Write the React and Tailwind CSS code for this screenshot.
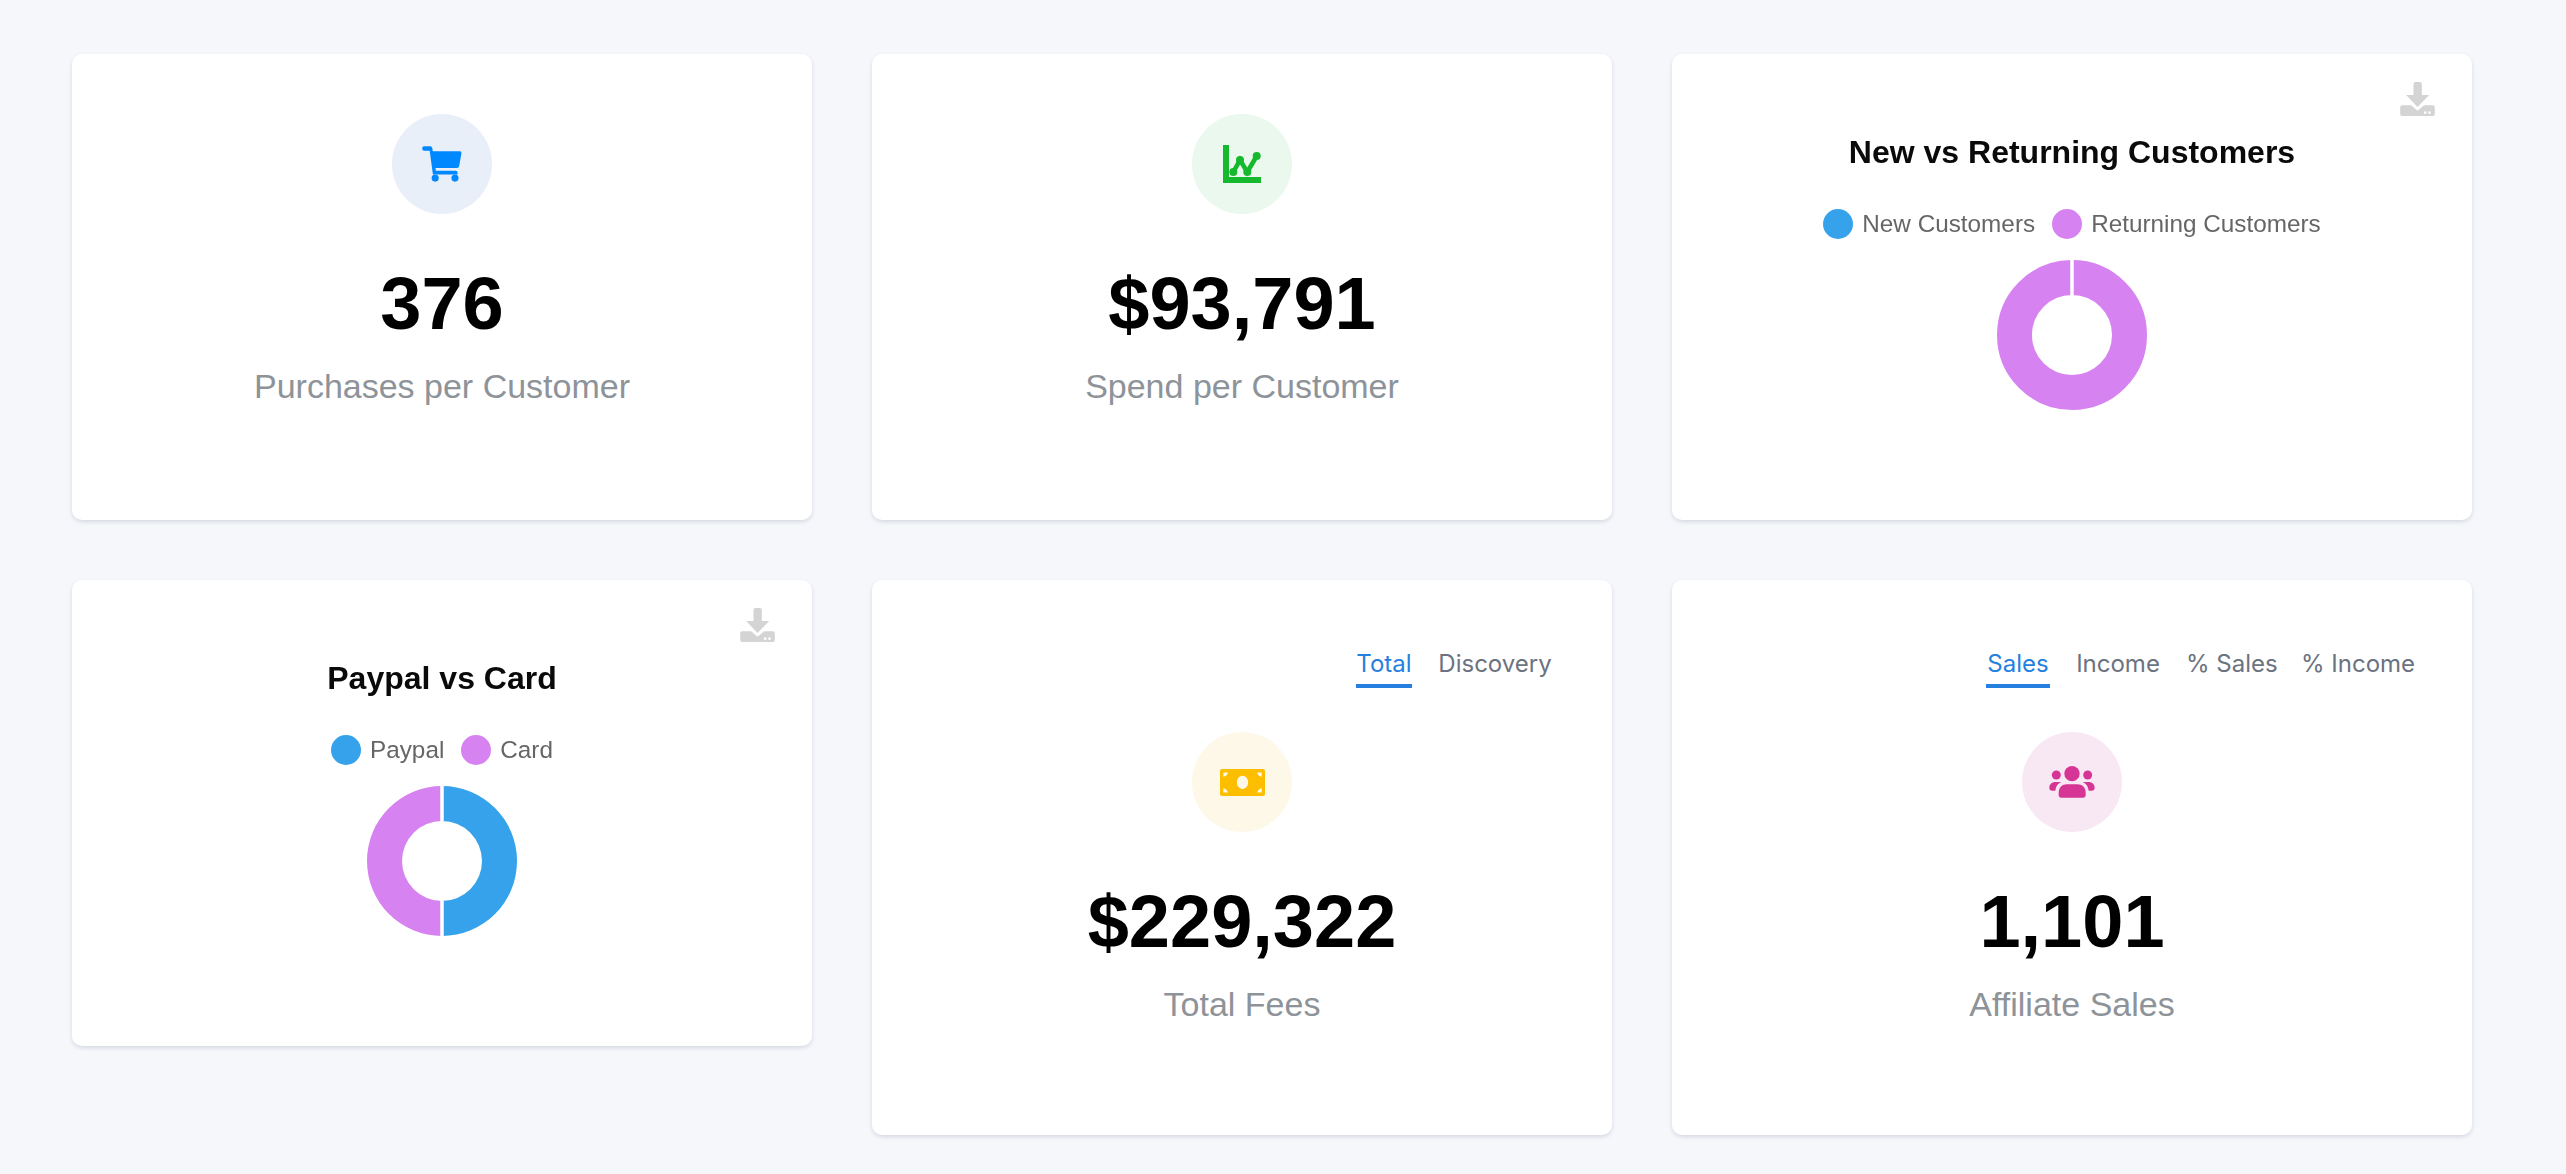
import React from "react";

const sans = "font-['Liberation_Sans',Arial,sans-serif]";
const cardBase = "rounded-[10px] bg-white shadow-[0_2px_4px_rgba(30,40,70,0.14)]";

function CartIcon() {
  return (
    <svg width="40" height="36" viewBox="125 137 122 111" fill="#0088ff">
      <path d="M131 138 H150 Q155 138 156 143 L157.5 153 H241 Q247 153 246 159 L239 199 Q238 205 232 205 H166 L167 213 H228 Q234 213 234 219 V225 H158 L148 152 H131 Q125 152 125 145 Q125 138 131 138 Z" />
      <circle cx="165" cy="236" r="11" />
      <circle cx="226" cy="236" r="11" />
    </svg>
  );
}

function ChartIcon() {
  return (
    <svg width="38" height="38" viewBox="0 0 38 38" fill="#16b92e">
      <rect x="0" y="0" width="6" height="38" />
      <rect x="0" y="32" width="38" height="6" />
      <polyline points="10.3,27 17,15 24.3,27 33.7,11" fill="none" stroke="#16b92e" strokeWidth="4.6" />
      <circle cx="10.3" cy="27" r="4" />
      <circle cx="17" cy="15" r="4" />
      <circle cx="24.3" cy="27" r="4" />
      <circle cx="33.7" cy="11" r="4" />
    </svg>
  );
}

function MoneyIcon() {
  return (
    <svg width="45" height="27" viewBox="267 447 136 81" fill="#fdbe00">
      <path
        fillRule="evenodd"
        d="M273 447 H397 a6 6 0 0 1 6 6 V522 a6 6 0 0 1 -6 6 H273 a6 6 0 0 1 -6 -6 V453 a6 6 0 0 1 6 -6 Z
           M277 457 V470 Q288 468 291 457 Z
           M393 457 V470 Q382 468 379 457 Z
           M277 518 V505 Q288 507 291 518 Z
           M393 518 V505 Q382 507 379 518 Z
           M335 467 a17 20 0 1 0 0.01 0 Z"
      />
    </svg>
  );
}

function GroupIcon() {
  return (
    <svg width="46" height="32" viewBox="267 440 136 96" fill="#d63595">
      <circle cx="335" cy="463" r="23" />
      <circle cx="288" cy="467" r="13.5" />
      <circle cx="382" cy="467" r="13.5" />
      <path d="M295 520 C295 505 305 495 320 495 H351 C366 495 376 505 376 520 V528 Q376 535 369 535 H302 Q295 535 295 528 Z" />
      <path d="M267 505 C267 495 275 488 285 488 H303 C294 492 287 499 285 514 H276 C270 514 267 511 267 505 Z" />
      <path d="M403 505 C403 495 395 488 385 488 H367 C376 492 383 499 385 514 H394 C400 514 403 511 403 505 Z" />
    </svg>
  );
}

function DownloadIcon() {
  return (
    <svg width="35" height="34" viewBox="88 66 104 102" fill="#d4d4d4" className="blur-[0.4px]">
      <path d="M128 72 a6 6 0 0 1 6 -6 h13 a6 6 0 0 1 6 6 V105 H175 L140 141 L106 105 H128 Z" />
      <path d="M94 136 H121 L140 152 L160 136 H186 a6 6 0 0 1 6 6 V162 a6 6 0 0 1 -6 6 H94 a6 6 0 0 1 -6 -6 V142 a6 6 0 0 1 6 -6 Z" />
      <circle cx="163" cy="158" r="4" fill="#ffffff" />
      <circle cx="176" cy="158" r="4" fill="#ffffff" />
    </svg>
  );
}

function StatBody({ bg, icon, value, label }) {
  return (
    <>
      <div className={`flex h-[100px] w-[100px] items-center justify-center rounded-full ${bg}`}>{icon}</div>
      <div className={`mt-[50px] text-[74px] leading-[80px] font-bold text-black ${sans}`}>{value}</div>
      <div className={`mt-[22px] text-[34px] leading-[40px] text-[#8d9399] ${sans}`}>{label}</div>
    </>
  );
}

function StatCard({ bg, icon, value, label }) {
  return (
    <div className={`flex h-[466px] flex-col items-center pt-[60px] ${cardBase}`}>
      <StatBody bg={bg} icon={icon} value={value} label={label} />
    </div>
  );
}

function Tabs({ items }) {
  return (
    <div className="flex w-full justify-end gap-[26px] pr-[60px]">
      {items.map((t, i) => (
        <div
          key={t.name}
          className={`h-[48px] border-b-4 pt-[9px] text-center text-[24px] leading-[30px] whitespace-nowrap font-['Inter',sans-serif] ${t.w} ${
            i === 0 ? "border-[#2680e0] text-[#2680e0]" : "border-transparent text-[#6b7280]"
          }`}
        >
          {t.name}
        </div>
      ))}
    </div>
  );
}

function TabCard({ tabs, bg, icon, value, label }) {
  return (
    <div className={`flex h-[555px] flex-col items-center pt-[60px] ${cardBase}`}>
      <Tabs items={tabs} />
      <div className="h-[44px]" />
      <StatBody bg={bg} icon={icon} value={value} label={label} />
    </div>
  );
}

function Donut({ half }) {
  const blue = "#36a2eb";
  const purple = "#d782f1";
  return (
    <svg width="150" height="150" viewBox="0 0 150 150">
      {half ? (
        <>
          <path d="M75 0 A75 75 0 0 1 75 150 V115 A40 40 0 0 0 75 35 Z" fill={blue} />
          <path d="M75 0 A75 75 0 0 0 75 150 V115 A40 40 0 0 1 75 35 Z" fill={purple} />
          <line x1="75" y1="0" x2="75" y2="35" stroke="#fff" strokeWidth="3.5" />
          <line x1="75" y1="115" x2="75" y2="150" stroke="#fff" strokeWidth="3.5" />
        </>
      ) : (
        <>
          <circle cx="75" cy="75" r="57.5" fill="none" stroke={purple} strokeWidth="35" />
          <line x1="75" y1="0" x2="75" y2="35" stroke="#fff" strokeWidth="3.5" />
        </>
      )}
    </svg>
  );
}

function ChartCard({ title, labels, half }) {
  return (
    <div className={`relative flex h-[466px] flex-col items-center pt-[78px] ${cardBase}`}>
      <div className="absolute top-[28px] right-[37px]">
        <DownloadIcon />
      </div>
      <div className={`flex flex-col items-center blur-[0.5px] ${sans}`}>
        <div className="h-[40px] text-[32px] leading-[40px] font-bold text-[#0a0a0a]">{title}</div>
        <div className="mt-[37px] flex h-[30px] items-center gap-[17px] text-[24.3px] leading-[30px] text-[#666666]">
          {labels.map((l, i) => (
            <div key={l} className="flex items-center gap-[9px]">
              <span className={`h-[30px] w-[30px] rounded-full ${i === 0 ? "bg-[#36a2eb]" : "bg-[#d782f1]"}`} />
              <span>{l}</span>
            </div>
          ))}
        </div>
        <div className="mt-[21px]">
          <Donut half={half} />
        </div>
      </div>
    </div>
  );
}

export default function App() {
  return (
    <div className="min-h-[1174px] bg-[#f5f7fb] pt-[54px] pr-[94px] pb-[39px] pl-[72px]">
      <div className="grid grid-cols-[740px_740px_800px] items-start gap-[60px]">
        <StatCard bg="bg-[#e8eff8]" icon={<CartIcon />} value="376" label="Purchases per Customer" />
        <StatCard bg="bg-[#eaf8ee]" icon={<ChartIcon />} value="$93,791" label="Spend per Customer" />
        <ChartCard title="New vs Returning Customers" labels={["New Customers", "Returning Customers"]} />
        <ChartCard title="Paypal vs Card" labels={["Paypal", "Card"]} half />
        <TabCard
          tabs={[
            { name: "Total", w: "w-[56px]" },
            { name: "Discovery", w: "w-[114px]" },
          ]}
          bg="bg-[#fdf8e8]"
          icon={<MoneyIcon />}
          value="$229,322"
          label="Total Fees"
        />
        <TabCard
          tabs={[
            { name: "Sales", w: "w-[64px]" },
            { name: "Income", w: "w-[84px]" },
            { name: "% Sales", w: "w-[89px]" },
            { name: "% Income", w: "w-[111px]" },
          ]}
          bg="bg-[#f8e8f4]"
          icon={<GroupIcon />}
          value="1,101"
          label="Affiliate Sales"
        />
      </div>
    </div>
  );
}
